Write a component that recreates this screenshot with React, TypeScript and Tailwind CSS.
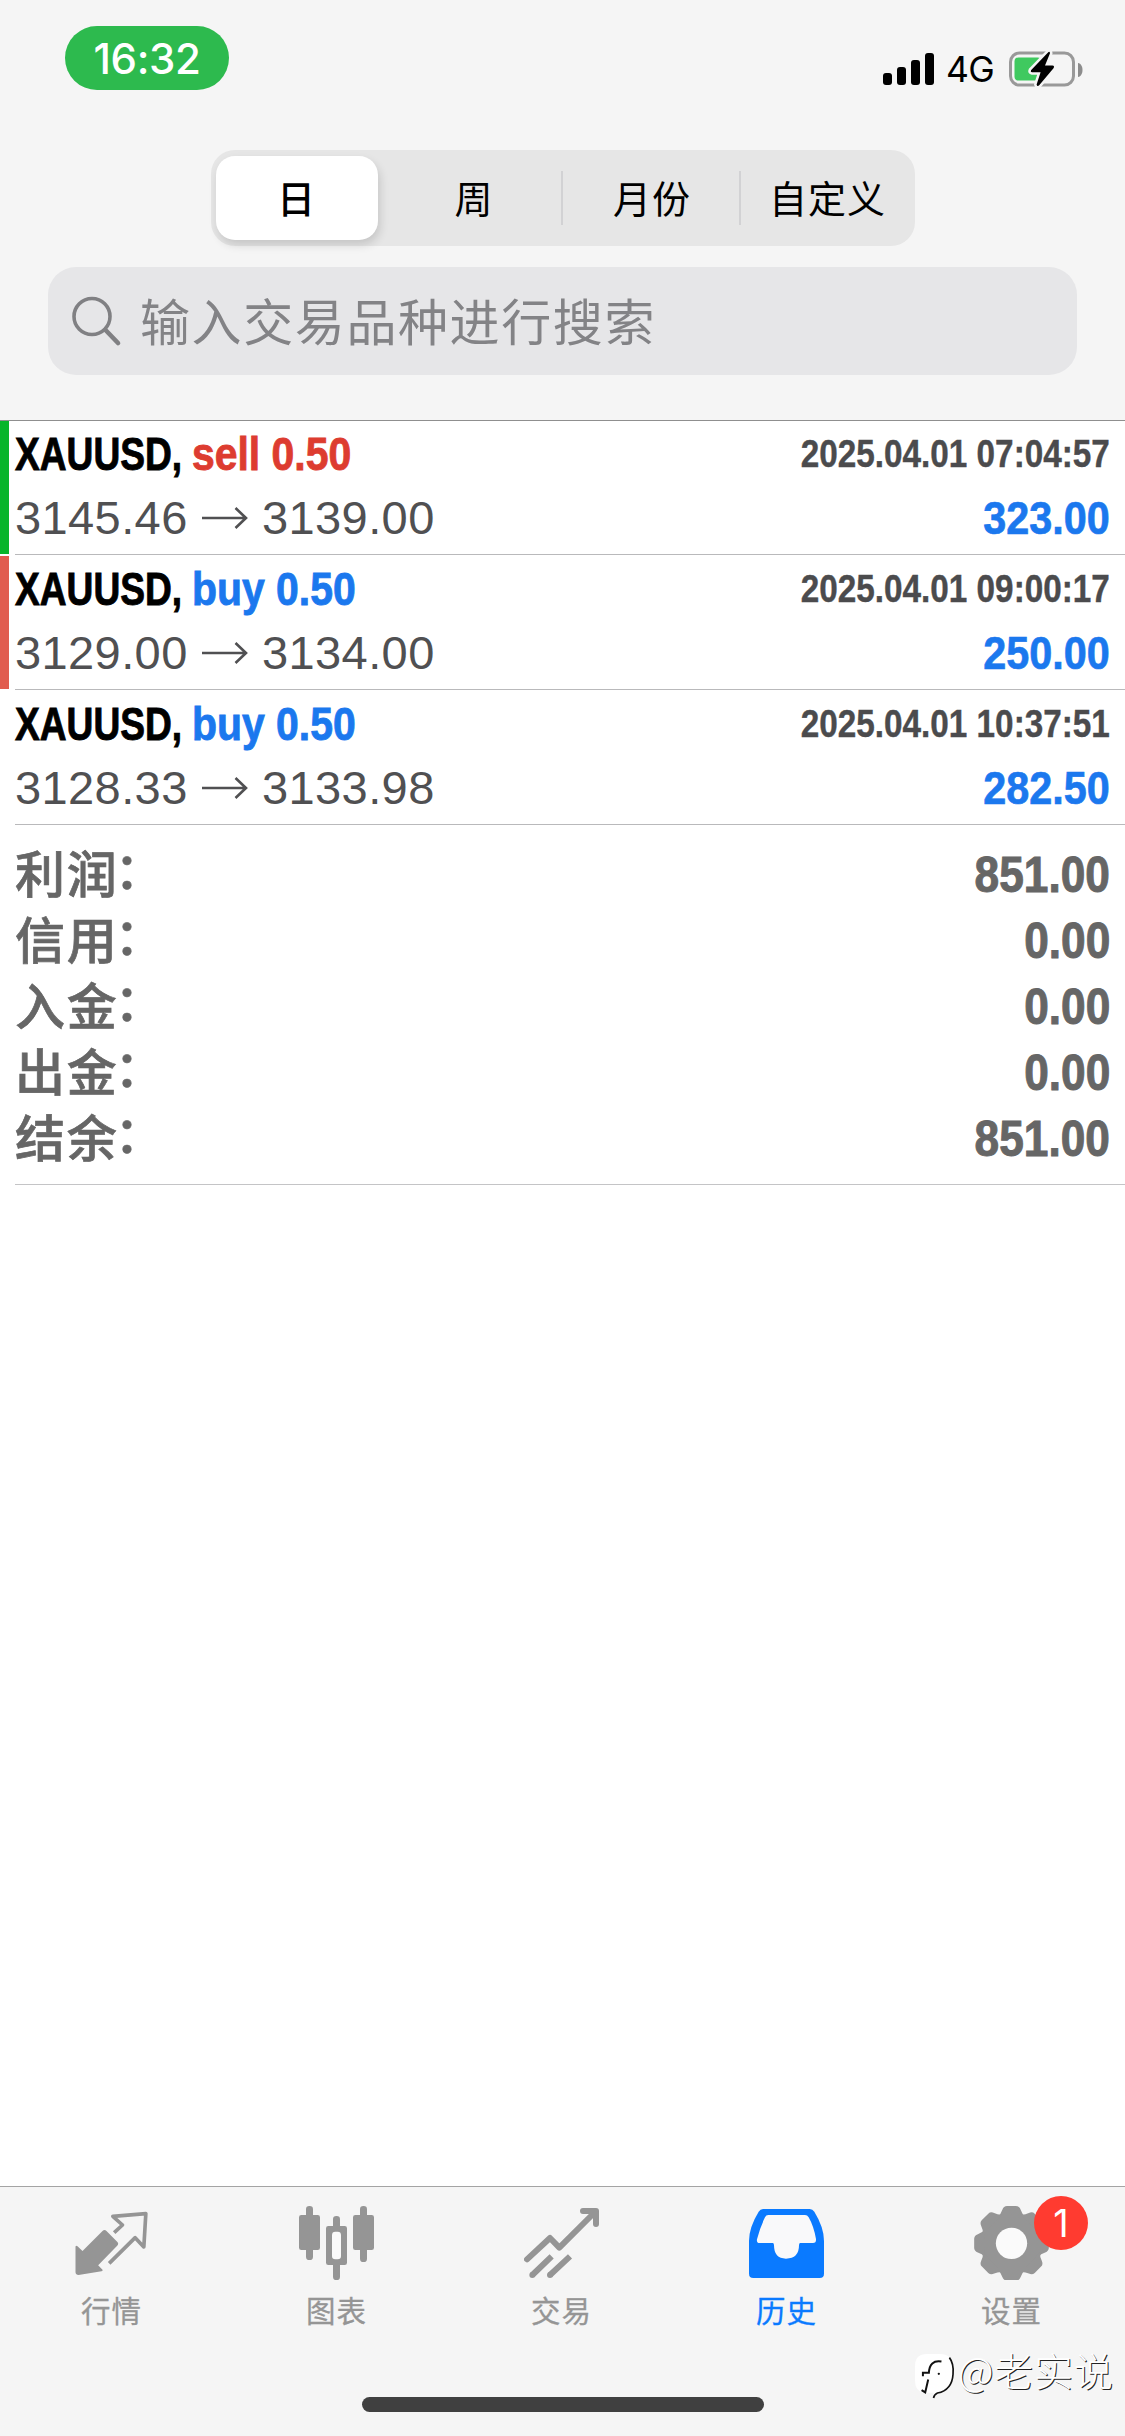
import type { ReactNode } from "react";

type Deal = {
  side: "sell" | "buy";
  open: string;
  close: string;
  time: string;
  profit: string;
  marker: string;
};

const deals: Deal[] = [
  { side: "sell", open: "3145.46", close: "3139.00", time: "2025.04.01 07:04:57", profit: "323.00", marker: "bg-[#08b52b]" },
  { side: "buy", open: "3129.00", close: "3134.00", time: "2025.04.01 09:00:17", profit: "250.00", marker: "bg-[#e15c4f]" },
  { side: "buy", open: "3128.33", close: "3133.98", time: "2025.04.01 10:37:51", profit: "282.50", marker: "bg-transparent" },
];

const totals = [
  ["利润", "851.00"],
  ["信用", "0.00"],
  ["入金", "0.00"],
  ["出金", "0.00"],
  ["结余", "851.00"],
];

function StatusBar() {
  return (
    <div className="flex h-[150px] items-start justify-between pl-[65px] pr-[42px]">
      <div className="mt-[26px] flex h-[64px] w-[164px] items-center justify-center rounded-full bg-[#2dba4e] font-['Inter'] text-[42px] font-medium tracking-[-0.4px] text-white">
        16:32
      </div>
      <div className="mt-[50px] flex items-start">
        <div className="mt-[3px] flex h-[32px] items-end gap-[5px]">
          <div className="h-[12px] w-[9px] rounded-[3px] bg-black" />
          <div className="h-[18px] w-[9px] rounded-[3px] bg-black" />
          <div className="h-[25px] w-[9px] rounded-[3px] bg-black" />
          <div className="h-[32px] w-[9px] rounded-[3px] bg-black" />
        </div>
        <div className="ml-[12px] w-[63px] whitespace-nowrap font-['Inter'] text-[35.5px] leading-[40px] tracking-[-0.6px]">4G</div>
        <svg className="h-[38px] w-[74px]" viewBox="1009 50 74 38" fill="none">
          <rect x="1010.5" y="53" width="63" height="32" rx="9" stroke="#999" strokeWidth="3" />
          <path d="M1078 63c6 1 6 13 0 14z" fill="#8c8c8c" />
          <rect x="1014.5" y="57.5" width="27" height="23" rx="4" fill="#3fc95f" />
          <path d="M1048.5 52l-17.5 18.2q-.8 1.8 1 2h8.6l-4 12.2q.6 2.6 2.6.9l14.3-17q1.4-2.6-1-2.8h-7.5l5-12.2q0-2.4-1.5-1.3z" fill="#000" stroke="#f5f5f5" strokeWidth="5" paintOrder="stroke" />
        </svg>
      </div>
    </div>
  );
}

function Segments() {
  return (
    <div className="mx-auto flex h-[96px] w-[704px] items-center rounded-[24px] bg-[#e6e6e6] pl-[5px] text-[38px] tracking-[1px]">
      <div className="flex h-[84px] w-[162px] items-center justify-center rounded-[19px] bg-white pb-[3px] font-medium shadow-[2px_5px_10px_rgba(0,0,0,0.14)]">日</div>
      <div className="flex h-[84px] flex-1 items-center justify-center pb-[3px] pl-[10px]">周</div>
      <div className="h-[54px] w-[2px] bg-[#d2d2d4]" />
      <div className="flex h-[84px] w-[176px] items-center justify-center pb-[3px] pl-[3px]">月份</div>
      <div className="h-[54px] w-[2px] bg-[#d2d2d4]" />
      <div className="flex h-[84px] w-[174px] items-center justify-center pb-[3px]">自定义</div>
    </div>
  );
}

function SearchField() {
  return (
    <div className="ml-[48px] mt-[21px] flex h-[108px] w-[1029px] items-center rounded-[28px] bg-[#e6e6e8] pl-[23px]">
      <svg className="h-[54px] w-[54px]" viewBox="0 0 54 54" fill="none" stroke="#808083" strokeLinecap="round">
        <circle cx="21" cy="22.5" r="18" strokeWidth="3.6" />
        <path d="M34.5 36L47 49" strokeWidth="4.6" />
      </svg>
      <span className="ml-[15px] pb-[4px] text-[50px] tracking-[1.6px] text-[#838386]">输入交易品种进行搜索</span>
    </div>
  );
}

function DealRow({ deal }: { deal: Deal }) {
  return (
    <div className="flex h-[135px]">
      <div className={`mb-px mt-px w-[9px] ${deal.marker}`} />
      <div className="ml-[6px] flex-1 border-b border-[#b9b9bb] pr-[15px] font-['Liberation_Sans']">
        <div className="flex h-[67px] items-start justify-between whitespace-nowrap font-bold leading-[68px]">
          <div className="flex text-[47px] [-webkit-text-stroke:0.9px]">
            <div className="w-[177px]">
              <span className="inline-block origin-left scale-x-[0.79] text-black">XAUUSD,</span>
            </div>
            <span className={`inline-block origin-left scale-x-[0.87] ${deal.side === "sell" ? "text-[#dd3c30]" : "text-[#1b78ee]"}`}>
              {deal.side} 0.50
            </span>
          </div>
          <span className="inline-block origin-right scale-x-[0.876] text-[38px] text-[#4b4b4d] [-webkit-text-stroke:0.4px]">{deal.time}</span>
        </div>
        <div className="flex h-[62px] items-start justify-between whitespace-nowrap text-[47px] leading-[62px]">
          <div className="flex items-center text-[#505052]">
            <span className="w-[187px] tracking-[0.4px]">{deal.open}</span>
            <svg className="mr-[14px] h-[24px] w-[46px]" viewBox="0 0 46 24" fill="none" stroke="currentColor" strokeWidth="2.6">
              <path d="M0 12H44M33.5 2L44 12L33.5 22" />
            </svg>
            <span className="tracking-[0.4px]">{deal.close}</span>
          </div>
          <span className="inline-block origin-right scale-x-[0.88] font-bold text-[#1b78ee] [-webkit-text-stroke:0.7px]">{deal.profit}</span>
        </div>
      </div>
    </div>
  );
}

function Tab({ label, active, badge, children }: { label: string; active?: boolean; badge?: string; children: ReactNode }) {
  return (
    <div className={`flex w-[225px] flex-col items-center ${active ? "text-[#0a7aff]" : "text-[#959595]"}`}>
      <div className="relative mt-[18px] h-[75px] w-[75px]">
        {children}
        {badge && (
          <div className="absolute -top-[9px] left-[60px] flex h-[54px] w-[54px] items-center justify-center rounded-full bg-[#ff3b30] font-['Inter'] text-[38px] text-white">
            {badge}
          </div>
        )}
      </div>
      <div className="mt-[6px] text-[29.5px] leading-[46px] tracking-[1px] [-webkit-text-stroke:0.3px]">{label}</div>
    </div>
  );
}

const teeth = [
  "rotate(0 859.5 220)",
  "rotate(45 859.5 220)",
  "rotate(90 859.5 220)",
  "rotate(135 859.5 220)",
  "rotate(180 859.5 220)",
  "rotate(225 859.5 220)",
  "rotate(270 859.5 220)",
  "rotate(315 859.5 220)",
];

function TabBar() {
  return (
    <nav className="relative h-[250px] border-t border-[#a4a4a4] bg-[#f5f5f5]">
      <div className="-ml-px flex">
        <Tab label="行情">
          <svg className="h-full w-full" viewBox="220.5 105 225 225" fill="currentColor">
            <path d="M225 230Q226 225 231 229L246 243L306 183Q312 177 318 183L350 215Q356 221 350 227L293 286L306 299Q308 303 303 304L234 315Q226 315 225 307Z" />
            <path d="M341 188L366 165L337 139L436 131L430 231L404 203L326 280" fill="none" stroke="currentColor" strokeWidth="11" strokeLinejoin="round" />
          </svg>
        </Tab>
        <Tab label="图表">
          <svg className="h-full w-full" viewBox="897 105 225 225" fill="currentColor">
            <rect x="918" y="108" width="21" height="162" rx="10" />
            <rect x="897" y="135" width="63" height="105" rx="7" />
            <rect x="999" y="138" width="21" height="192" rx="10" />
            <rect x="978" y="168" width="63" height="117" rx="7" />
            <rect x="996" y="185" width="27" height="83" rx="10" fill="#fafafa" />
            <rect x="1080" y="108" width="21" height="168" rx="10" />
            <rect x="1059" y="135" width="63" height="105" rx="7" />
          </svg>
        </Tab>
        <Tab label="交易">
          <svg className="h-full w-full" viewBox="432 105 225 225" fill="none" stroke="currentColor" strokeWidth="18">
            <path d="M441 268L510 204L538 233L645 126M609 123H648V162" strokeLinecap="round" strokeLinejoin="round" />
            <path d="M457 315L515 259M510 315L570 259" />
            <circle cx="457" cy="315" r="9" fill="currentColor" stroke="none" />
            <circle cx="510" cy="315" r="9" fill="currentColor" stroke="none" />
          </svg>
        </Tab>
        <Tab label="历史" active>
          <svg className="h-full w-full" viewBox="72 105 225 225" fill="currentColor">
            <path d="M114 117H254Q263 117 268 125Q297 172 297 213V311Q297 324 284 324H85Q72 324 72 311V213Q72 172 101 125Q106 117 114 117Z" />
            <path d="M130 135H240Q247 135 251 142Q266 168 273 207Q274 219 264 219H226Q222 219 222 226Q222 266 183 266Q147 266 147 226Q147 219 143 219H104Q94 219 96 208Q105 172 120 142Q123 135 130 135Z" fill="#f9f9fa" />
          </svg>
        </Tab>
        <Tab label="设置" badge="1">
          <svg className="h-full w-full" viewBox="747 105 225 225" fill="currentColor">
            <circle cx="859.5" cy="220" r="91" />
            {teeth.map((t) => (
              <path key={t} transform={t} d="M818 140Q828 132 832 119Q836 108 846 108H873Q883 108 887 119Q891 132 901 140Z" />
            ))}
            <circle cx="859.5" cy="220" r="47" fill="#fafafa" />
          </svg>
        </Tab>
      </div>
      <div className="absolute left-[362px] top-[210px] h-[15px] w-[402px] rounded-full bg-[#404040]" />
      <div className="absolute left-[913px] top-[160px] flex items-start">
        <svg className="mt-[5px] h-[48px] w-[42px]" viewBox="25 35 125 145" fill="none">
          <path d="M66 41H106Q142 41 142 78V116Q142 156 96 160L86 168V158H60Q30 156 30 122V78Q30 41 66 41Z" fill="#fff" />
          <path d="M134 52Q148 70 145 102Q142 150 98 159Q88 163 86 174" stroke="#111" strokeWidth="5" />
          <path d="M110 64Q74 58 72 98H54V108M70 118L61 157L50 150" stroke="#111" strokeWidth="6" />
          <circle cx="102" cy="101" r="3.5" fill="#111" />
        </svg>
        <span className="ml-[3px] whitespace-nowrap text-[39px] font-light leading-[44px] tracking-[0.8px] text-white [text-shadow:1px_1px_0.5px_#222]">@老实说</span>
      </div>
    </nav>
  );
}

export default function App() {
  return (
    <div className="flex h-[2436px] w-[1125px] flex-col overflow-hidden bg-white font-['Noto_Sans_CJK_SC',sans-serif] text-black">
      <header className="h-[421px] border-b border-[#8f8f8f] bg-[#f5f5f5]">
        <StatusBar />
        <Segments />
        <SearchField />
      </header>
      <main className="-mt-px flex-1">
        {deals.map((d) => (
          <DealRow key={d.time} deal={d} />
        ))}
        <section className="ml-[15px] border-b border-[#c4c4c6] pb-[12px] pr-[15px] pt-[17px] text-[#666]">
          {totals.map(([label, value]) => (
            <div key={label} className="flex h-[66px] items-start justify-between text-[50px]">
              <span className="flex font-medium leading-[58px] tracking-[1.7px] [-webkit-text-stroke:0.7px]">
                {label}
                <span className="-ml-[4px] -mt-[4px]">：</span>
              </span>
              <span className="inline-block origin-right scale-x-[0.885] font-['Liberation_Sans'] font-bold leading-[66px] [-webkit-text-stroke:1px]">{value}</span>
            </div>
          ))}
        </section>
      </main>
      <TabBar />
    </div>
  );
}
